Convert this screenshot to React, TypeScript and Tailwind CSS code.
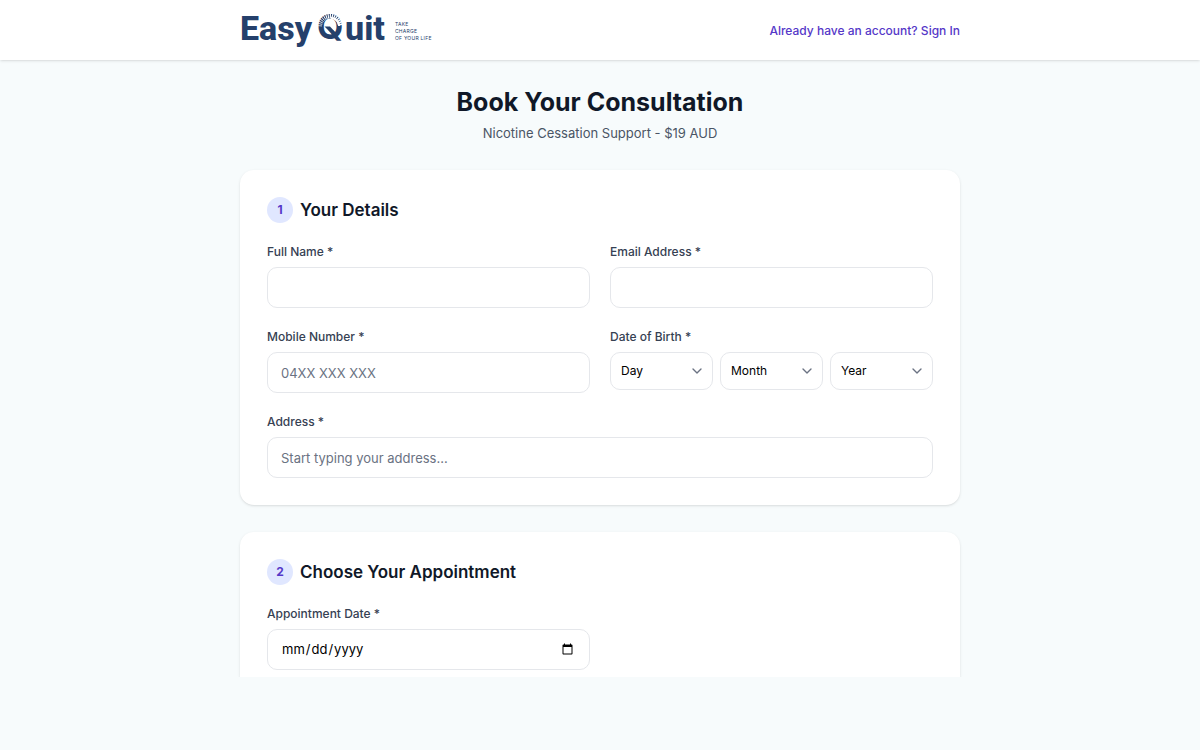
import type { InputHTMLAttributes, ReactNode } from "react";
import { ChevronDown } from "lucide-react";

// Gaps that split the upper half of the Q into sun rays, widening clockwise.
const GAPS = Array.from({ length: 16 }, (_, i) => {
  const angle = ((184 + i * 11) * Math.PI) / 180;
  return {
    x1: 13 + 8 * Math.cos(angle),
    y1: 13.5 + 8 * Math.sin(angle),
    x2: 13 + 14.5 * Math.cos(angle),
    y2: 13.5 + 14.5 * Math.sin(angle),
    width: 0.7 + i * 0.06,
  };
});

function Logo() {
  return (
    <a href="#home" aria-label="Easy Quit" className="flex items-center pb-1 text-[#25406b]">
      <span className="flex font-[Roboto,sans-serif] text-[34px] leading-[40px] font-extrabold">
        <span>Easy</span>
        <svg viewBox="0 0 28 40" className="ml-[5px] h-[40px] w-[28px] overflow-visible" aria-hidden="true">
          <text
            x="0"
            y="31"
            fontSize="34"
            fontWeight="700"
            fontFamily="Inter, sans-serif"
            fill="currentColor"
          >
            Q
          </text>
          <g transform="translate(0 5)">
            <path d="M7.5 13.5 H13 L20 21 L17.5 23.5 Z" fill="currentColor" />
            {GAPS.map((g, i) => (
              <line
                key={i}
                x1={g.x1}
                y1={g.y1}
                x2={g.x2}
                y2={g.y2}
                stroke="white"
                strokeWidth={g.width}
              />
            ))}
            <path d="M14 4.7 A9 9 0 0 1 22.2 13" fill="none" stroke="white" strokeWidth="2" />
          </g>
        </svg>
        <span>uit</span>
      </span>
      <span className="ml-[10px] flex flex-col pt-[7px] font-[Inter,sans-serif] text-[5px] leading-[7px] tracking-wider">
        <span>TAKE</span>
        <span>CHARGE</span>
        <span>OF YOUR LIFE</span>
      </span>
    </a>
  );
}

function Card({ children, className = "" }: { children: ReactNode; className?: string }) {
  return <section className={`bg-white px-[27px] pt-[27px] shadow-sm ${className}`}>{children}</section>;
}

function StepTitle({ step, children }: { step: number; children: ReactNode }) {
  return (
    <h2 className="mb-5 flex items-center gap-[7px] text-[17px] leading-[26px] font-semibold text-gray-900">
      <span className="flex size-[26px] items-center justify-center rounded-full bg-indigo-100 text-[12px] font-bold text-[#5538c8]">
        {step}
      </span>
      {children}
    </h2>
  );
}

const LABEL = "mb-[7px] block text-[12px] leading-[17px] font-medium text-gray-700";

function Field({
  id,
  label,
  className = "",
  ...input
}: { id: string; label: string } & InputHTMLAttributes<HTMLInputElement>) {
  return (
    <div className={className}>
      <label htmlFor={id} className={LABEL}>
        {label} *
      </label>
      <input
        id={id}
        className="block h-[41px] w-full rounded-[10px] border border-gray-200 bg-white px-[13px] text-[13px] text-black placeholder:text-gray-500"
        {...input}
      />
    </div>
  );
}

function DatePart({ name, options }: { name: string; options: (string | number)[] }) {
  return (
    <div className="grid items-center">
      <select
        aria-label={name}
        className="col-start-1 row-start-1 h-[38px] w-full appearance-none rounded-[10px] border border-gray-200 bg-white px-[10px] text-[12px] text-black"
      >
        <option value="">{name}</option>
        {options.map((o) => (
          <option key={o}>{o}</option>
        ))}
      </select>
      <ChevronDown
        aria-hidden="true"
        className="pointer-events-none col-start-1 row-start-1 mr-2 size-4 justify-self-end text-gray-500"
      />
    </div>
  );
}

const DAYS = Array.from({ length: 31 }, (_, i) => i + 1);
const MONTHS = [
  "January", "February", "March", "April", "May", "June",
  "July", "August", "September", "October", "November", "December",
];
const YEARS = Array.from({ length: 90 }, (_, i) => 2007 - i);

export default function App() {
  return (
    <div className="min-h-screen bg-[#f7fbfc] font-[Inter,sans-serif]">
      <header className="bg-white shadow-sm">
        <div className="mx-auto flex h-[60px] max-w-[720px] items-center justify-between">
          <Logo />
          <a href="#sign-in" className="text-[12px] leading-[17px] font-medium text-[#5538c8]">
            Already have an account? Sign In
          </a>
        </div>
      </header>

      <main className="mx-auto max-w-[720px] pt-[27px]">
        <div className="mb-[27px] text-center">
          <h1 className="text-[25px] leading-[30px] font-bold text-gray-900">Book Your Consultation</h1>
          <p className="mt-[6px] text-[13px] leading-[20px] text-gray-600">
            Nicotine Cessation Support - $19 AUD
          </p>
        </div>

        <form>
          <Card className="mb-[27px] rounded-[14px] pb-[27px]">
            <StepTitle step={1}>Your Details</StepTitle>
            <div className="grid grid-cols-2 gap-5">
              <Field id="name" label="Full Name" type="text" />
              <Field id="email" label="Email Address" type="email" />
              <Field id="mobile" label="Mobile Number" type="tel" placeholder="04XX XXX XXX" />
              <fieldset>
                <legend className={LABEL}>Date of Birth *</legend>
                <div className="grid grid-cols-3 gap-[7px]">
                  <DatePart name="Day" options={DAYS} />
                  <DatePart name="Month" options={MONTHS} />
                  <DatePart name="Year" options={YEARS} />
                </div>
              </fieldset>
              <div className="col-span-2">
                <Field id="address" label="Address" type="text" placeholder="Start typing your address..." />
              </div>
            </div>
          </Card>

          <Card className="rounded-t-[14px] pb-[7px] [clip-path:inset(-4px_-4px_0_-4px)]">
            <StepTitle step={2}>Choose Your Appointment</StepTitle>
            <div className="grid grid-cols-2 gap-5">
              <Field id="date" label="Appointment Date" type="date" />
            </div>
          </Card>
        </form>
      </main>
    </div>
  );
}
